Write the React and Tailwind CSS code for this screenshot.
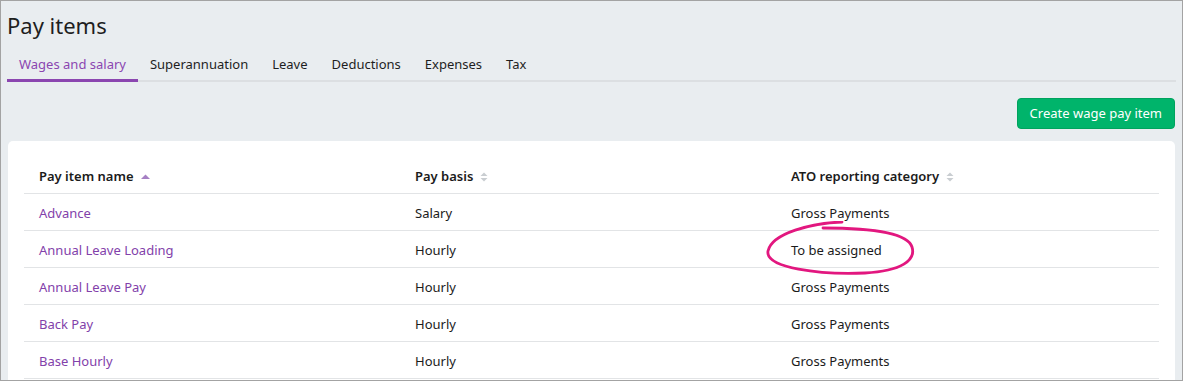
import { useState } from 'react';

const tabs = ['Wages and salary', 'Superannuation', 'Leave', 'Deductions', 'Expenses', 'Tax'];

const rows = [
  { name: 'Advance', basis: 'Salary', category: 'Gross Payments' },
  { name: 'Annual Leave Loading', basis: 'Hourly', category: 'To be assigned' },
  { name: 'Annual Leave Pay', basis: 'Hourly', category: 'Gross Payments' },
  { name: 'Back Pay', basis: 'Hourly', category: 'Gross Payments' },
  { name: 'Base Hourly', basis: 'Hourly', category: 'Gross Payments' },
];

function SortIcon({ active }) {
  if (active) {
    return (
      <svg width="11" height="10" viewBox="0 0 11 10" className="ml-1.5">
        <path d="M1 7 L5.5 2.5 L10 7 Z" fill="#a680c4" />
      </svg>
    );
  }
  return (
    <svg width="10" height="12" viewBox="0 0 10 12" className="ml-1.5">
      <path d="M1.5 5 L5 1.5 L8.5 5 Z" fill="#c9cdd1" />
      <path d="M1.5 7 L5 10.5 L8.5 7 Z" fill="#c9cdd1" />
    </svg>
  );
}

export default function App() {
  const [active, setActive] = useState(0);

  return (
    <div
      className="w-[1183px] h-[381px] overflow-hidden border border-[#a3a3a3] bg-[#e9edf0] text-[#1b1b1b]"
      style={{ fontFamily: '"Noto Sans", sans-serif' }}
    >
      <h1 className="pl-[6px] pt-[8px] text-[22px] leading-[32px] text-[#1e1e1e]">Pay items</h1>

      <div className="mx-[6px] mt-[13px] flex border-b-2 border-[#dcdfe2]">
        {tabs.map((t, i) => (
          <button
            key={t}
            onClick={() => setActive(i)}
            className={
              i === active
                ? 'relative -mb-[2px] px-3 pb-[5px] text-[13px] leading-[20px] text-[#8b46b0] border-b-[3px] border-[#8b46b0]'
                : 'relative -mb-[2px] px-3 pb-[5px] text-[13px] leading-[20px] text-[#1e1e1e] border-b-[3px] border-transparent'
            }
          >
            {t}
          </button>
        ))}
      </div>

      <div className="flex justify-end pr-[7px] pt-[16px]">
        <button className="h-[31px] px-3 rounded-[4px] border border-[#00a35e] bg-[#00b46b] text-white text-[13px]">
          Create wage pay item
        </button>
      </div>

      <div className="relative mx-[7px] mt-[12px] rounded-[5px] bg-white px-[16px] pt-[16px] pb-4">
        <div className="grid grid-cols-[376px_376px_1fr] h-[37px] pt-[3px] items-center border-b border-[#e2e4e6] text-[13px] font-semibold">
          <div className="pl-[15px] flex items-center">
            Pay item name <SortIcon active />
          </div>
          <div className="pl-[15px] flex items-center">
            Pay basis <SortIcon />
          </div>
          <div className="pl-[15px] flex items-center">
            ATO reporting category <SortIcon />
          </div>
        </div>
        {rows.map((r) => (
          <div
            key={r.name}
            className="grid grid-cols-[376px_376px_1fr] h-[37px] pt-[3px] items-center border-b border-[#e2e4e6] text-[13px]"
          >
            <div className="pl-[15px] text-[#8241aa]">{r.name}</div>
            <div className="pl-[15px]">{r.basis}</div>
            <div className="pl-[15px]">{r.category}</div>
          </div>
        ))}

        <svg
          className="absolute left-[744px] top-[80px] pointer-events-none"
          width="170"
          height="60"
          viewBox="752 220 170 60"
        >
          <path
            d="M842 221 C 812 222, 772 232, 768 250 C 765 267, 820 274, 865 272 C 902 270, 916 259, 912 246 C 908 233, 878 227, 823 227"
            fill="none"
            stroke="#e2177f"
            strokeWidth="2.8"
            strokeLinecap="round"
          />
        </svg>
      </div>
    </div>
  );
}
